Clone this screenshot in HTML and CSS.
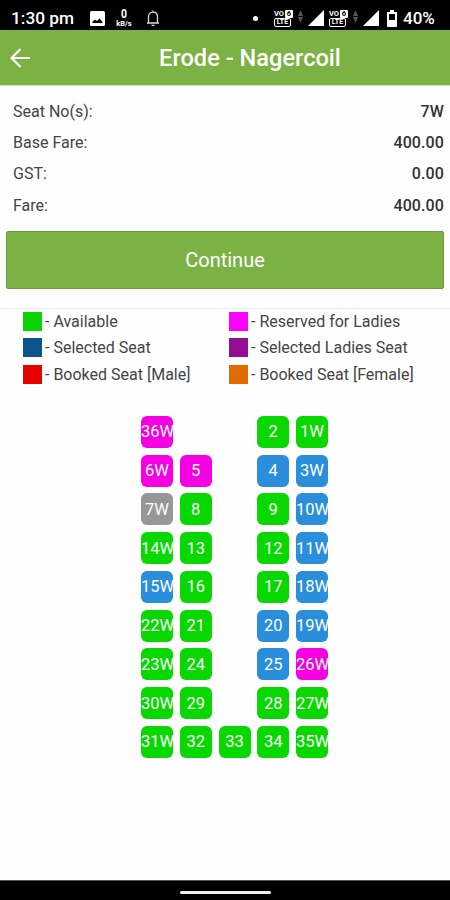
FILE: index.html
```html
<!DOCTYPE html>
<html lang="en">
<head>
    <meta charset="UTF-8">
    <meta name="viewport" content="width=device-width, initial-scale=1">
    <title>Erode - Nagercoil</title>
    <link rel="stylesheet" href="styles.css">
</head>
<body>
<div class="status">
    <span class="time">1:30 pm</span>
    <svg class="pic" width="15" height="15" viewBox="0 0 15 15"><rect width="15" height="15" rx="1.500" fill="#fff"/><path d="M2.500 12v-1.500l2.500-2 2 1.500 2.500-2.500 3 3.500v1z" fill="#000"/></svg>
    <span class="speed"><b>0</b><i>kB/s</i></span>
    <svg class="bell" width="14" height="17" viewBox="0 0 14 17" fill="none" stroke="#ddd" stroke-width="1.300"><path d="M1 13h12M2.500 13V7c0-3 2-4.800 4.500-4.800S11.500 4 11.500 7v6M7 2V.5M5.500 15.300h3"/></svg>
    <span class="dot"></span>
    <span class="volte"><b>VO<em>6</em></b><i>LTE</i></span>
    <svg class="arrows" width="5" height="14" viewBox="0 0 5 14" fill="#555"><path d="M2.500 0L5 6H0zM0 7h5L2.500 13z"/></svg>
    <svg class="signal" width="16" height="16" viewBox="0 0 16 16"><path d="M16 0v16H0z" fill="#fff"/></svg>
    <span class="volte"><b>VO<em>6</em></b><i>LTE</i></span>
    <svg class="arrows" width="5" height="14" viewBox="0 0 5 14" fill="#555"><path d="M2.500 0L5 6H0zM0 7h5L2.500 13z"/></svg>
    <svg class="signal" width="16" height="16" viewBox="0 0 16 16"><path d="M16 0v16H0z" fill="#fff"/></svg>
    <svg class="battery" width="10" height="17" viewBox="0 0 10 17"><path d="M3 0h4v2h2q1 0 1 1v13q0 1-1 1H1q-1 0-1-1V3q0-1 1-1h2z" fill="#fff"/><path d="M2 4h6v6H2z" fill="#000"/></svg>
    <span class="percent">40%</span>
</div>
<div class="header">
    <svg class="back" width="20" height="20" viewBox="0 0 20 20" fill="none" stroke="#fff" stroke-width="2.200"><path d="M10.500 1L1.500 10l9 9M1.500 10H20"/></svg>
    <h1>Erode - Nagercoil</h1>
</div>
<div class="fare">
    <ul>
        <li><span>Seat No(s):</span><b>7W</b></li>
        <li><span>Base Fare:</span><b>400.00</b></li>
        <li><span>GST:</span><b>0.00</b></li>
        <li><span>Fare:</span><b>400.00</b></li>
    </ul>
    <button class="continue">Continue</button>
</div>
<ul class="legend">
    <li><i class="available"></i>- Available</li>
    <li><i class="reserved"></i>- Reserved for Ladies</li>
    <li><i class="selected"></i>- Selected Seat</li>
    <li><i class="selected_ladies"></i>- Selected Ladies Seat</li>
    <li><i class="male"></i>- Booked Seat [Male]</li>
    <li><i class="female"></i>- Booked Seat [Female]</li>
</ul>
<div class="seats">
    <a class="pink w">36W</a><a class="none"></a><a class="none"></a><a>2</a><a>1W</a>
    <a class="pink">6W</a><a class="pink">5</a><a class="none"></a><a class="blue">4</a><a class="blue">3W</a>
    <a class="gray">7W</a><a>8</a><a class="none"></a><a>9</a><a class="blue w">10W</a>
    <a class="w">14W</a><a>13</a><a class="none"></a><a>12</a><a class="blue w">11W</a>
    <a class="blue w">15W</a><a>16</a><a class="none"></a><a>17</a><a class="blue w">18W</a>
    <a class="w">22W</a><a>21</a><a class="none"></a><a class="blue">20</a><a class="blue w">19W</a>
    <a class="w">23W</a><a>24</a><a class="none"></a><a class="blue">25</a><a class="pink w">26W</a>
    <a class="w">30W</a><a>29</a><a class="none"></a><a>28</a><a class="w">27W</a>
    <a class="w">31W</a><a>32</a><a>33</a><a>34</a><a class="w">35W</a>
</div>
<div class="nav"><span></span></div>
</body>
</html>
```
FILE: styles.css
```css
*{margin: 0; padding: 0; box-sizing: border-box}
ul{list-style: none}
i, em{font-style: normal}

body{
    height: 900px;
    display: flex;
    flex-direction: column;
    overflow: hidden;
    background: #fefefe;
    font-family: Roboto, "Liberation Sans", sans-serif;
    color: #444;
}
.status{
    height: 30px;
    flex: none;
    display: flex;
    align-items: center;
    padding: 6px 0 0 11px;
    background: #000;
    color: #fff;
}
.status svg, .status span{
    flex: none;
}
.time{
    width: 79px;
    font-size: 17.3px;
    font-weight: 500;
    white-space: nowrap;
}
.speed{
    width: 16px;
    margin-left: 11px;
    text-align: center;
}
.speed b{
    display: block;
    font-size: 13px;
    line-height: 12px;
    transform: scaleX(0.8);
}
.speed i{
    display: block;
    font-size: 7.5px;
    line-height: 8px;
    font-weight: bold;
}
.bell{
    margin-left: 14px;
}
.dot{
    width: 5px;
    height: 5px;
    margin: 0 16px 0 93px;
    border-radius: 50%;
    background: #fff;
}
.volte{
    width: 19px;
}
.volte b{
    display: flex;
    align-items: center;
    justify-content: space-between;
    font-size: 7.5px;
    line-height: 8px;
}
.volte em{
    width: 8px;
    height: 8px;
    line-height: 8px;
    border-radius: 1px;
    background: #fff;
    color: #000;
    text-align: center;
}
.volte i{
    display: block;
    width: 17px;
    height: 9px;
    border: 1px solid #fff;
    border-radius: 2px;
    font-size: 7px;
    line-height: 7px;
    font-weight: bold;
    text-align: center;
}
.arrows{
    margin: 0 5px 3px;
}
.signal{
    margin-right: 5px;
}
.battery{
    margin-left: 3px;
}
.percent{
    margin-left: 6px;
    font-size: 17px;
    font-weight: 500;
}
.header{
    height: 56px;
    flex: none;
    display: flex;
    align-items: center;
    padding: 0 10px 0;
    border-bottom: 1px solid #d3dec6;
    background: #7cb143;
    color: #fff;
}
.header h1{
    flex: 1;
    margin-left: 30px;
    text-align: center;
    font-size: 23.6px;
    font-weight: 500;
}
.fare{
    height: 223px;
    flex: none;
    padding: 10px 6px 0;
    border-bottom: 1px solid #ececec;
}
.fare li{
    height: 31.2px;
    display: flex;
    justify-content: space-between;
    align-items: center;
    padding-left: 7px;
    font-size: 16px;
}
.fare li b{
    font-weight: 500;
    letter-spacing: 0.1px;
    color: #333;
}
.continue{
    display: block;
    width: 100%;
    height: 58px;
    margin-top: 10px;
    border: 1px solid #6b9a3b;
    border-radius: 2px;
    background: #7cb143;
    color: #fff;
    font: 20px Roboto, "Liberation Sans", sans-serif;
}
.legend{
    flex: none;
    display: grid;
    grid-template-columns: 206px 1fr;
    grid-auto-rows: 26.3px;
    padding: 0 0 0 23px;
}
.legend li{
    display: flex;
    align-items: center;
    padding-bottom: 1px;
    font-size: 16px;
}
.legend i{
    width: 19px;
    height: 19px;
    margin-right: 3px;
}
.available{background: #0bd300}
.reserved{background: #f0f}
.selected{background: #0d548f}
.selected_ladies{background: #950d95}
.male{background: #e60000}
.female{background: #e06c00}

.seats{
    flex: 1;
    display: grid;
    grid-template-columns: repeat(5, 32px);
    grid-auto-rows: 32px;
    gap: 6.75px;
    padding: 28px 0 0 141px;
}
.seats a{
    display: flex;
    align-items: center;
    justify-content: center;
    overflow: hidden;
    border-radius: 6px;
    background: #08d800;
    color: #fff;
    font-size: 16.5px;
}
.seats .w{justify-content: flex-start}
.seats .pink{background: #f400e2}
.seats .blue{background: #2b8edb}
.seats .gray{background: #979797}
.seats .none{background: none}

.nav{
    height: 20px;
    flex: none;
    display: flex;
    align-items: center;
    justify-content: center;
    padding-top: 3px;
    border-top: 1px solid #555;
    background: #000;
}
.nav span{
    width: 91px;
    height: 3px;
    border-radius: 2px;
    background: #f0f0f0;
}
```
